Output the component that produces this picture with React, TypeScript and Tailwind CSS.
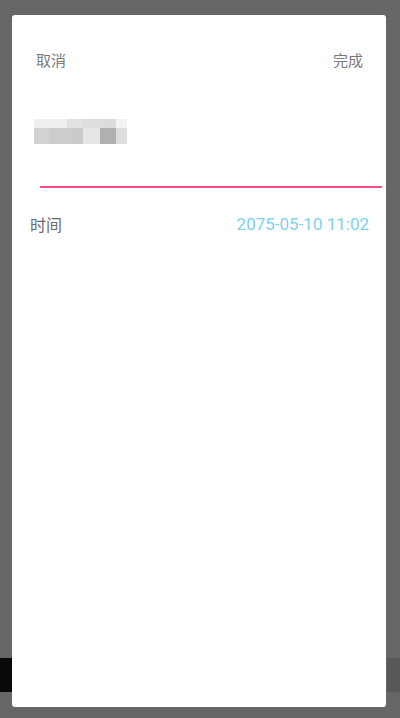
import React from "react";

const top = ["#eeeeee", "#eeeeee", "#e2e2e2", "#dddddd", "#dcdcdc", "#f3f3f3"];
const bottom = ["#d2d2d2", "#cccccc", "#cbcbcb", "#e6e6e6", "#b0b0b0", "#dedede"];
const widths = [16, 17, 16, 17, 16, 11];

export default function App() {
  return (
    <div className="relative w-[400px] h-[718px] bg-[#666666] overflow-hidden pt-[15px] pl-[12px]" style={{ fontFamily: '"Noto Sans CJK SC", Roboto, sans-serif' }}>
      <div className="absolute left-0 top-[658px] w-[12px] h-[34px] bg-[#0a0a0a]" />
      <div className="absolute right-0 top-[658px] w-[13px] h-[34px] bg-[#585858]" />
      <div className="relative w-[374px] h-[692px] bg-white rounded-[3px] flex flex-col">
        <div className="flex justify-between items-center pl-[24px] pr-[23px] mt-[34px] h-[20px] text-[15px] text-[#7a7a7a] leading-none">
          <span>取消</span>
          <span>完成</span>
        </div>
        <div className="ml-[22px] mt-[50px] flex flex-col">
          <div className="flex">
            {top.map((c, i) => (
              <div key={i} className="h-[9px]" style={{ width: widths[i], background: c }} />
            ))}
          </div>
          <div className="flex">
            {bottom.map((c, i) => (
              <div key={i} className="h-[16px]" style={{ width: widths[i], background: c }} />
            ))}
          </div>
        </div>
        <div className="ml-[28px] mr-[4px] mt-[42px] h-[2px] bg-[#ff4d88]" />
        <div className="flex justify-between items-center pl-[18px] pr-[17px] mt-[25px] h-[22px] leading-none">
          <span className="text-[16px] text-[#6a6a6a]">时间</span>
          <span className="text-[17px] text-[#7fd0ef]" style={{ fontFamily: "Roboto, sans-serif" }}>2075-05-10 11:02</span>
        </div>
      </div>
    </div>
  );
}
